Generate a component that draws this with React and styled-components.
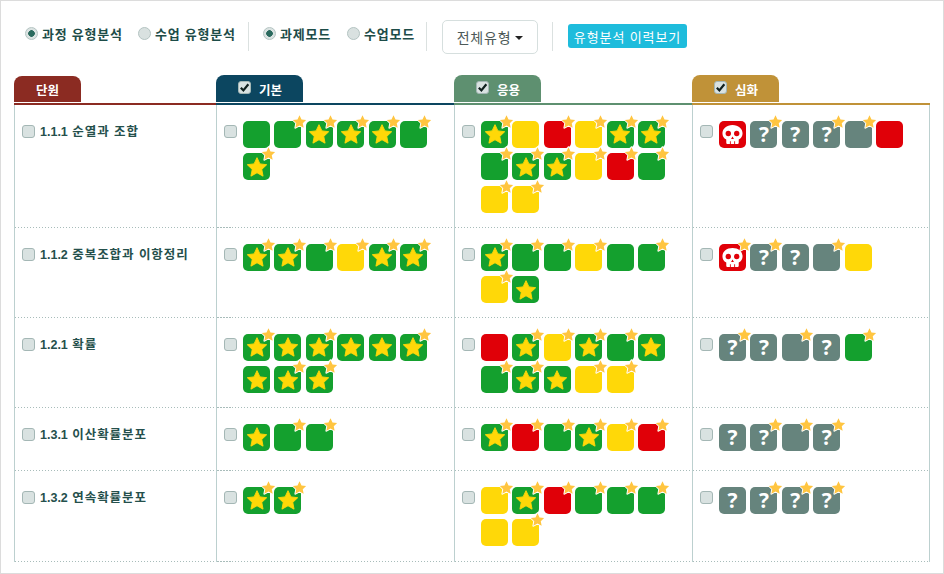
import React from 'react'
import styled, { createGlobalStyle } from 'styled-components'

const GlobalStyle = createGlobalStyle`
  * { box-sizing: border-box; }
  body {
    margin: 0;
    background: #fff;
    font-family: "Liberation Sans", "Noto Sans CJK KR", sans-serif;
  }
`
const Page = styled.div`
  width: 944px;
  height: 574px;
  border: 1px solid #dcdcdc;
  padding: 0 0 0 13px;
  overflow: hidden;
  background: #fff;
`
const Toolbar = styled.div`
  height: 74px;
  display: flex;
  align-items: flex-start;
  padding: 19px 0 0 11px;
`
const RadioLabel = styled.label`
  display: flex;
  align-items: center;
  height: 26px;
  width: ${p => p.$width}px;
  font-size: 13px;
  font-weight: bold;
  letter-spacing: .75px;
  color: #1d4c48;
  white-space: nowrap;
`
const RadioDot = styled.span`
  width: 13px;
  height: 13px;
  margin-right: 4px;
  flex: none;
  border-radius: 50%;
  border: 1px solid #b4c4c2;
  background: ${p => p.$on ? 'radial-gradient(circle, #2b6a5e 0, #2b6a5e 3px, #dbe3e2 3.6px)' : '#d9e1e0'};
`
const Divider = styled.span`
  width: 1px;
  height: 29px;
  margin: 2px ${p => p.$right}px 0 ${p => p.$left}px;
  background: #dbe1e0;
`
const SelectButton = styled.button`
  width: 96px;
  height: 34px;
  margin-top: 0;
  padding: 0;
  display: flex;
  align-items: center;
  justify-content: center;
  gap: 4px;
  background: #fff;
  border: 1px solid #d6dfde;
  border-radius: 5px;
  font: 14px "Liberation Sans", "Noto Sans CJK KR", sans-serif;
  letter-spacing: .8px;
  color: #4d5a58;
`
const Caret = styled.i`
  width: 0;
  height: 0;
  margin-top: 2px;
  border-left: 4px solid transparent;
  border-right: 4px solid transparent;
  border-top: 4px solid #222;
`
const HistoryButton = styled.button`
  width: 119px;
  height: 24px;
  margin-top: 4px;
  padding: 0;
  background: #1ebcdc;
  border: 0;
  border-radius: 3px;
  color: #fff;
  font: 13px "Liberation Sans", "Noto Sans CJK KR", sans-serif;
  letter-spacing: .9px;
`
const Table = styled.div`
  width: 916px;
`
const Row = styled.div`
  display: grid;
  grid-template-columns: 202px 238px 238px 238px;
  height: ${p => p.$height}px;
`
const HeadCell = styled.div`
  height: 30px;
  border-bottom: 2px solid ${p => p.$color};
`
const Tab = styled.div`
  width: ${p => p.$width}px;
  height: ${p => p.$short ? 26 : 27}px;
  margin-top: ${p => p.$short ? 1 : 0}px;
  display: flex;
  align-items: center;
  justify-content: ${p => p.$short ? 'center' : 'flex-start'};
  padding-left: ${p => p.$short ? 0 : 22}px;
  background: ${p => p.$color};
  border-radius: 8px 8px 0 0;
  color: #fff;
  font-size: 12.5px;
  font-weight: bold;
`
const TabText = styled.span`
  margin-left: 8px;
  margin-top: 2px;
`
const Cell = styled.div`
  display: flex;
  align-items: flex-start;
  padding: 15.7px 0 1px 7px;
  border-left: 1px solid #bcd0cf;
  border-right: ${p => p.$last ? '1px solid #bcd0cf' : 0};
  background: repeating-linear-gradient(90deg, #a8bcba 0 1.5px, transparent 1.5px 3px) bottom / 100% 1px no-repeat;
`
const Check = styled.span`
  width: 13px;
  height: 13px;
  flex: none;
  margin-top: ${p => p.$flat ? -3 : 4.5}px;
  display: flex;
  align-items: center;
  justify-content: center;
  background: #d9e2e1;
  border: 1px solid #a4b7b5;
  border-radius: 3px;
  svg { width: 11px; height: 11px; }
`
const UnitName = styled.span`
  margin: 0 0 0 5px;
  font-size: 12.5px;
  font-weight: bold;
  letter-spacing: .95px;
  color: #25504c;
  white-space: nowrap;
`
const UnitNumber = styled.span`
  letter-spacing: 0;
`
const Tiles = styled.div`
  width: 200px;
  margin-left: 6px;
  display: flex;
  flex-wrap: wrap;
  column-gap: 4.4px;
  row-gap: 5.6px;
`
const tileColors = { g: '#14a02e', S: '#14a02e', y: '#ffd808', r: '#e00008', K: '#e00008', n: '#66847d', q: '#66847d' }
const TileBox = styled.div`
  position: relative;
  width: 27px;
  height: 27px;
  display: flex;
  align-items: center;
  justify-content: center;
  background: ${p => tileColors[p.$kind]};
  border-radius: 5px;
`
const Question = styled.span`
  font-family: "Open Sans", sans-serif;
  font-size: 21px;
  font-weight: 700;
  line-height: 27px;
  color: #fff;
`
const Badge = styled.svg`
  position: absolute;
  top: -7px;
  right: -5.5px;
  width: 15px;
  height: 15px;
`

const STAR = '12,1.8 15.2,8.6 22.6,9.5 17.2,14.6 18.6,22 12,18.3 5.4,22 6.8,14.6 1.4,9.5 8.8,8.6'

function Skull() {
  return (
    <svg width="23" height="23" viewBox="0 0 24 24">
      <path fill="#fff" d="M12 2C5.8 2 1.5 5.8 1.5 10.8c0 3 1.4 5.2 4 6.5v3.2c0 .9.6 1.5 1.5 1.5h10c.9 0 1.5-.6 1.5-1.5v-3.2c2.6-1.3 4-3.5 4-6.5C22.500 5.800 18.200 2 12 2z" />
      <circle cx="7.600" cy="11" r="2.800" fill="#e00008" />
      <circle cx="16.400" cy="11" r="2.800" fill="#e00008" />
      <path fill="#e00008" d="M12 14l1.500 2.600h-3zM9.300 19h.9v3h-.9zM13.800 19h.9v3h-.9z" />
    </svg>
  )
}

function Tile({ code }) {
  const kind = code[0]
  return (
    <TileBox $kind={kind}>
      {kind === 'S' && (
        <svg width="22" height="22" viewBox="0 0 24 24">
          <polygon points={STAR} fill="#ffd808" stroke="#ffd808" strokeWidth="1" strokeLinejoin="round" />
        </svg>
      )}
      {kind === 'q' && <Question>?</Question>}
      {kind === 'K' && <Skull />}
      {code[1] === '*' && (
        <Badge viewBox="0 0 24 24">
          <polygon points={STAR} fill="#ffc540" stroke="#fff" strokeWidth="3" strokeLinejoin="round" paintOrder="stroke" />
        </Badge>
      )}
    </TileBox>
  )
}

function CheckBox({ checked, flat }) {
  return (
    <Check $flat={flat}>
      {checked && (
        <svg viewBox="0 0 12 12">
          <path d="M2 6.200l2.800 3L10.200 2.500" fill="none" stroke="#10201e" strokeWidth="2.400" />
        </svg>
      )}
    </Check>
  )
}

function Radio({ on, width, children }) {
  return (
    <RadioLabel $width={width}>
      <RadioDot $on={on} />
      {children}
    </RadioLabel>
  )
}

const rows = [
  {
    no: '1.1.1',
    name: '순열과 조합',
    height: 123,
    basic: 'g g* S* S* S* g* S*',
    applied: 'S* y r* y* S* S* g* S* S* y* r* g* y* y*',
    deep: 'K q* q q* n* r',
  },
  {
    no: '1.1.2',
    name: '중복조합과 이항정리',
    height: 90,
    basic: 'S* S* g* y* S* S*',
    applied: 'S* g* g* y* g g* y* S',
    deep: 'K* q* q n* y',
  },
  {
    no: '1.2.1',
    name: '확률',
    height: 90,
    basic: 'S* S S* S S S* S S* S*',
    applied: 'r S* y* S* g* S g* S* S y* y*',
    deep: 'q* q n* q g*',
  },
  {
    no: '1.3.1',
    name: '이산확률분포',
    height: 63,
    basic: 'S g* g*',
    applied: 'S* r* g* S* y* r*',
    deep: 'q q* n* q*',
  },
  {
    no: '1.3.2',
    name: '연속확률분포',
    height: 91,
    basic: 'S* S*',
    applied: 'y* S* r* g* g* g* y y*',
    deep: 'q q* q* q*',
  },
]

function TileCell({ codes, last }) {
  return (
    <Cell $last={last}>
      <CheckBox />
      <Tiles>
        {codes.split(' ').map((code, i) => <Tile key={i} code={code} />)}
      </Tiles>
    </Cell>
  )
}

function App() {
  return (
    <>
      <GlobalStyle />
      <Page>
        <Toolbar>
          <Radio on width={113}>과정 유형분석</Radio>
          <Radio width={98}>수업 유형분석</Radio>
          <Divider $left={12} $right={14} />
          <Radio on width={84}>과제모드</Radio>
          <Radio width={79}>수업모드</Radio>
          <Divider $left={0} $right={15} />
          <SelectButton>전체유형 <Caret /></SelectButton>
          <Divider $left={14} $right={15} />
          <HistoryButton>유형분석 이력보기</HistoryButton>
        </Toolbar>
        <Table>
          <Row $height={30}>
            <HeadCell $color="#8b2b22"><Tab $short $width={67} $color="#8b2b22">단원</Tab></HeadCell>
            <HeadCell $color="#0c4660"><Tab $width={87} $color="#0c4660"><CheckBox checked flat /><TabText>기본</TabText></Tab></HeadCell>
            <HeadCell $color="#5e9070"><Tab $width={87} $color="#5e9070"><CheckBox checked flat /><TabText>응용</TabText></Tab></HeadCell>
            <HeadCell $color="#c09238"><Tab $width={87} $color="#c09238"><CheckBox checked flat /><TabText>심화</TabText></Tab></HeadCell>
          </Row>
          {rows.map(row => (
            <Row key={row.no} $height={row.height}>
              <Cell>
                <CheckBox />
                <UnitName><UnitNumber>{row.no}</UnitNumber> {row.name}</UnitName>
              </Cell>
              <TileCell codes={row.basic} />
              <TileCell codes={row.applied} />
              <TileCell codes={row.deep} last />
            </Row>
          ))}
        </Table>
      </Page>
    </>
  )
}

export default App
